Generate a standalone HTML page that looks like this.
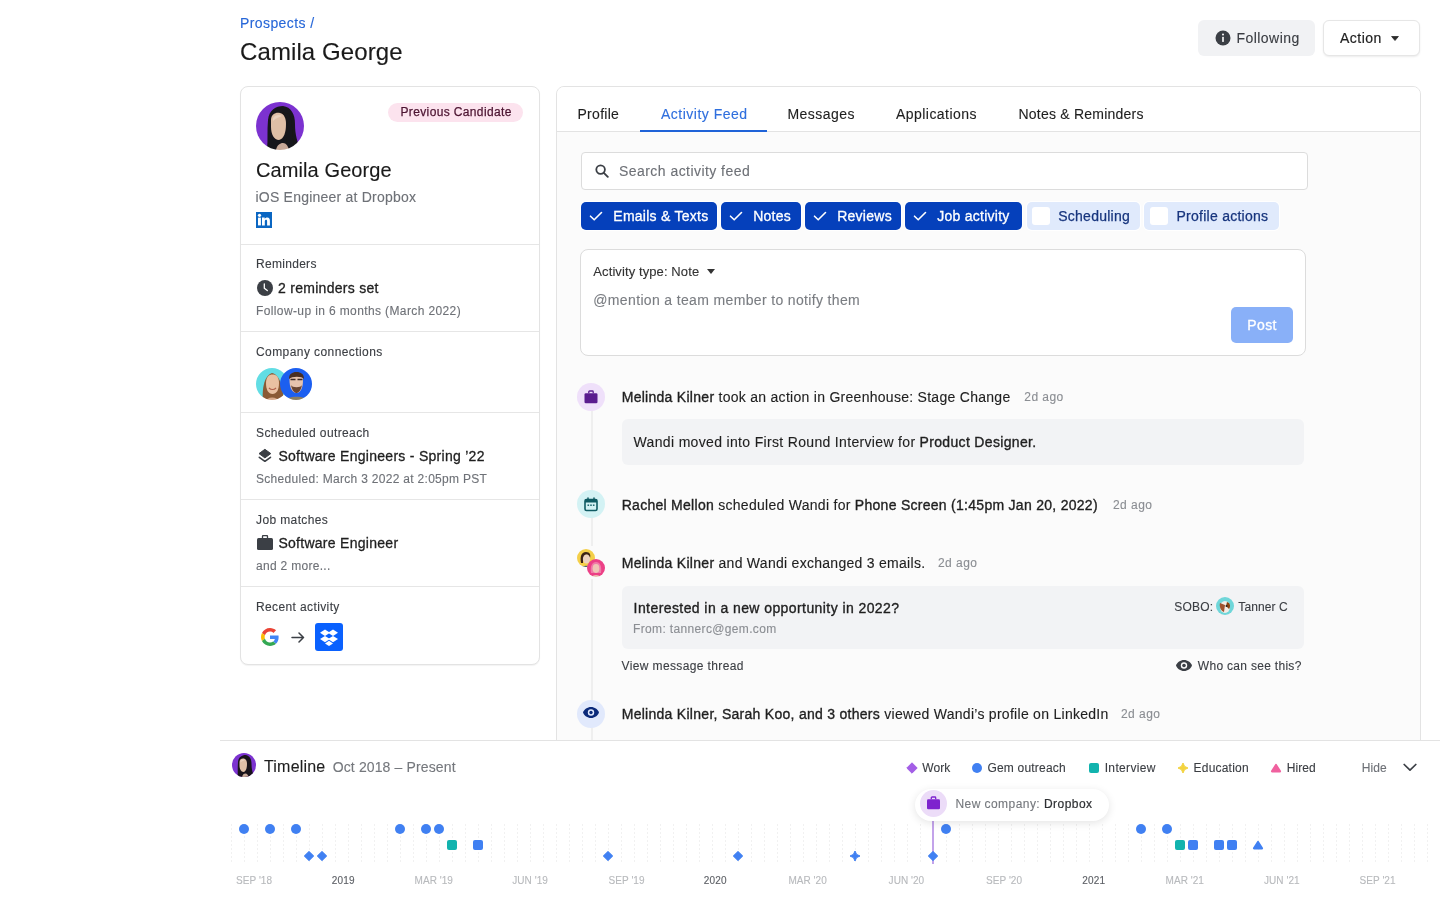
<!DOCTYPE html>
<html><head><meta charset="utf-8">
<style>
*{box-sizing:border-box;margin:0;padding:0}
html,body{width:1440px;height:900px;overflow:hidden;background:#fff}
body{font-family:"Liberation Sans",sans-serif;color:#1f1f1f;position:relative}
.a{position:absolute;white-space:nowrap;line-height:1;-webkit-text-stroke:.12px currentColor}
.t14{font-size:14px;letter-spacing:.28px}
.t12{font-size:12px;letter-spacing:.3px}
.g{color:#6e7177}
.m{-webkit-text-stroke:.35px currentColor}
svg{display:block}
</style></head><body>
<div id="root" style="position:absolute;left:0;top:0;width:1440px;height:900px;will-change:transform;background:#fff">

<!-- header -->
<div class="a t14" style="left:240px;top:16px;color:#2767d8;letter-spacing:.4px">Prospects /</div>
<div class="a" style="left:240px;top:39.5px;font-size:24px;color:#1a1a1a;letter-spacing:.1px">Camila George</div>

<div class="a" style="left:1198px;top:20px;width:117px;height:36px;background:#f1f2f4;border-radius:6px"></div>
<svg class="a" style="left:1215px;top:30px" width="16" height="16" viewBox="0 0 16 16"><circle cx="8" cy="8" r="7.5" fill="#3b3f45"/><rect x="7.2" y="6.8" width="1.6" height="5.2" rx=".4" fill="#fff"/><circle cx="8" cy="4.6" r="1" fill="#fff"/></svg>
<div class="a t14" style="left:1236.5px;top:31px;color:#3a3d42;letter-spacing:.45px">Following</div>

<div class="a" style="left:1323px;top:20px;width:97px;height:36px;background:#fff;border:1px solid #e6e6e6;border-radius:6px;box-shadow:0 1px 2px rgba(0,0,0,.08)"></div>
<div class="a t14" style="left:1340px;top:31px;color:#1f1f1f;letter-spacing:.5px;-webkit-text-stroke:.2px currentColor">Action</div>
<svg class="a" style="left:1390.5px;top:35.5px" width="8" height="5" viewBox="0 0 8 5"><path d="M.6 .5H7.4L4 4.5Z" fill="#2b2b2b" stroke="#2b2b2b" stroke-width=".8" stroke-linejoin="round"/></svg>

<!-- left card -->
<div class="a" style="left:240px;top:86px;width:300px;height:579px;border:1px solid #e3e3e3;border-radius:8px;background:#fff;box-shadow:0 1px 1px rgba(0,0,0,.05)"></div>
<div class="a" style="left:241px;top:244px;width:298px;height:1px;background:#e6e6e6"></div>
<div class="a" style="left:241px;top:331px;width:298px;height:1px;background:#e6e6e6"></div>
<div class="a" style="left:241px;top:412px;width:298px;height:1px;background:#e6e6e6"></div>
<div class="a" style="left:241px;top:499px;width:298px;height:1px;background:#e6e6e6"></div>
<div class="a" style="left:241px;top:586px;width:298px;height:1px;background:#e6e6e6"></div>

<!-- avatar -->
<svg class="a" style="left:256px;top:102px" width="48" height="48" viewBox="0 0 48 48">
<defs><clipPath id="cav"><circle cx="24" cy="24" r="24"/></clipPath></defs>
<filter id="bl0" x="-10%" y="-10%" width="120%" height="120%"><feGaussianBlur stdDeviation="0.6"/></filter><g clip-path="url(#cav)"><g filter="url(#bl0)"><rect x="-4" y="-4" width="56" height="56" fill="#7c33d0"/>
<path d="M11 48C12 38 11 28 12 18C13 8 20 4 27 4C35 5 39 12 39 22C39 32 41 40 45 48Z" fill="#19141a"/>
<path d="M15 18C15 12 20 10 24 11C28 12 30 16 30 22C30 30 28 37 23 38C18 38 15 32 15 25Z" fill="#dfbfa6"/>
<path d="M17 16C19 13 23 12 26 14C24 15 20 16 17 19Z" fill="#ead2bf"/>
<path d="M26 10C31 13 32 20 31 28C30 34 30 39 31 46L38 46C36 34 37 20 33 12Z" fill="#19141a"/>
<path d="M20 48C21 43 24 41 27 41C30 41 32 44 33 48Z" fill="#c7a898"/>
</g></g></svg>

<div class="a" style="left:388px;top:102.5px;width:135px;height:19px;background:#fce3ee;border-radius:10px"></div>
<div class="a t12" style="left:400.5px;top:105.7px;color:#4c1431;letter-spacing:.36px;-webkit-text-stroke:.25px currentColor">Previous Candidate</div>

<div class="a" style="left:256px;top:160px;font-size:20px;color:#1a1a1a;letter-spacing:.1px">Camila George</div>
<div class="a t14" style="left:255.5px;top:190.4px;color:#6e7177;letter-spacing:.22px">iOS Engineer at Dropbox</div>
<svg class="a" style="left:256px;top:212px" width="16" height="16" viewBox="0 0 16 16"><rect width="16" height="16" fill="#0a66c2"/><rect x="2" y="5.6" width="2.9" height="7.8" fill="#fff"/><circle cx="3.5" cy="3.3" r="1.6" fill="#fff"/><path d="M6 5.6H8.7V6.8C9.2 6 10.1 5.4 11.3 5.4C13.2 5.4 13.9 6.7 13.9 8.8V13.4H11.1V9.3C11.1 8.3 10.8 7.8 10.1 7.8C9.3 7.8 8.8 8.4 8.8 9.4V13.4H6Z" fill="#fff"/></svg>

<!-- reminders -->
<div class="a t12" style="left:256px;top:258.4px;color:#3b3e43">Reminders</div>
<svg class="a" style="left:257px;top:280px" width="16" height="16" viewBox="0 0 16 16"><circle cx="8" cy="8" r="8" fill="#3b3f45"/><path d="M7.3 3.8V8.2L10.3 10.6" stroke="#fff" stroke-width="1.3" fill="none" stroke-linecap="round" stroke-linejoin="round"/></svg>
<div class="a t14 m" style="left:278px;top:281px;color:#1f1f1f;-webkit-text-stroke:.3px">2 reminders set</div>
<div class="a t12 g" style="left:256px;top:304.6px;letter-spacing:.38px">Follow-up in 6 months (March 2022)</div>

<!-- company connections -->
<div class="a t12" style="left:256px;top:345.8px;color:#3b3e43;letter-spacing:.42px">Company connections</div>
<svg class="a" style="left:256px;top:368px" width="58" height="32" viewBox="0 0 58 32">
<defs><clipPath id="cc1"><circle cx="16" cy="16" r="16"/></clipPath><clipPath id="cc2"><circle cx="40" cy="16" r="16"/></clipPath><filter id="bl1" x="-10%" y="-10%" width="120%" height="120%"><feGaussianBlur stdDeviation="0.6"/></filter></defs>
<g clip-path="url(#cc1)"><g filter="url(#bl1)"><rect x="-2" y="-2" width="36" height="36" fill="#62dde4"/><path d="M7 34C6 24 7 8 16 5C25 7 27 22 28 34Z" fill="#8a5a34"/><path d="M10 15C10 9 13 6.5 16.5 6.5C20.5 6.5 23 9 23 15C23 22 20.5 26 16.5 26C12.5 26 10 22 10 15Z" fill="#e9c1a2"/><path d="M13 20C15 22 18 22 20 20" stroke="#b0604a" stroke-width="1.2" fill="none"/><path d="M9 34C11 28 21 28 24 34Z" fill="#d7a98a"/></g></g>
<g clip-path="url(#cc2)"><g filter="url(#bl1)"><rect x="22" y="-2" width="36" height="36" fill="#1f5ff0"/><path d="M33.5 12C33.5 6.5 37 5 40.5 5C44.5 5 47 7 47 12C47 20 44.5 25 40.5 25C36.5 25 33.5 20 33.5 12Z" fill="#e6c2ad"/><path d="M33 11C33 6 36 4 40.5 4C45 4 48 6 48 11C46 8 36 8 33 11Z" fill="#4a2e20"/><path d="M34.5 11.5H39.5M41.5 11.5H46.5" stroke="#3a2a25" stroke-width="1.4"/><path d="M35 17C36 23 39 25 40.5 25C42 25 45 23 46 17C45 20 36 20 35 17Z" fill="#6b4533"/><path d="M28 34C30 27 51 27 53 34Z" fill="#8a7f64"/></g></g>
</svg>

<!-- scheduled outreach -->
<div class="a t12" style="left:256px;top:426.8px;color:#3b3e43;letter-spacing:.38px">Scheduled outreach</div>
<svg class="a" style="left:257px;top:448px" width="16" height="16" viewBox="0 0 16 16"><path d="M7.9 1.3L13.8 5.6L7.9 9.9L2 5.6Z" fill="#3b3f45" stroke="#3b3f45" stroke-width="1" stroke-linejoin="round"/><path d="M2.3 9.3L7.9 13.3L13.5 9.3" stroke="#3b3f45" stroke-width="1.6" fill="none" stroke-linecap="round" stroke-linejoin="round"/></svg>
<div class="a t14" style="left:278.4px;top:449.2px;color:#1f1f1f;letter-spacing:.28px;-webkit-text-stroke:.3px">Software Engineers - Spring ’22</div>
<div class="a t12 g" style="left:256px;top:472.8px;letter-spacing:.3px">Scheduled: March 3 2022 at 2:05pm PST</div>

<!-- job matches -->
<div class="a t12" style="left:256px;top:513.8px;color:#3b3e43;letter-spacing:.38px">Job matches</div>
<svg class="a" style="left:257px;top:535px" width="16" height="15" viewBox="0 0 16 15"><path d="M5.5 3V1.5C5.5 .9 6 .5 6.5 .5H9.5C10 .5 10.5 .9 10.5 1.5V3" stroke="#3b3f45" stroke-width="1.3" fill="none"/><rect x="0" y="3" width="16" height="12" rx="1.5" fill="#3b3f45"/></svg>
<div class="a t14" style="left:278.4px;top:536.2px;color:#1f1f1f;letter-spacing:.28px;-webkit-text-stroke:.3px">Software Engineer</div>
<div class="a t12 g" style="left:256px;top:559.8px;letter-spacing:.3px">and 2 more...</div>

<!-- recent activity -->
<div class="a t12" style="left:256px;top:600.8px;color:#3b3e43;letter-spacing:.38px">Recent activity</div>
<svg class="a" style="left:261px;top:628px" width="18" height="18" viewBox="0 0 48 48"><path fill="#EA4335" d="M24 9.5c3.54 0 6.71 1.22 9.21 3.6l6.85-6.85C35.9 2.38 30.47 0 24 0 14.62 0 6.51 5.38 2.56 13.22l7.98 6.19C12.43 13.72 17.74 9.5 24 9.5z"/><path fill="#4285F4" d="M46.98 24.55c0-1.57-.15-3.09-.38-4.55H24v9.02h12.94c-.58 2.96-2.26 5.48-4.78 7.18l7.73 6c4.51-4.18 7.09-10.36 7.09-17.65z"/><path fill="#FBBC05" d="M10.53 28.59c-.48-1.45-.76-2.99-.76-4.59s.27-3.14.76-4.59l-7.98-6.19C.92 16.46 0 20.12 0 24c0 3.88.92 7.54 2.56 10.78l7.97-6.19z"/><path fill="#34A853" d="M24 48c6.48 0 11.93-2.13 15.89-5.81l-7.73-6c-2.15 1.45-4.92 2.3-8.16 2.3-6.26 0-11.57-4.22-13.47-9.91l-7.98 6.19C6.51 42.62 14.62 48 24 48z"/></svg>
<svg class="a" style="left:291px;top:632px" width="14" height="11" viewBox="0 0 14 11"><path d="M1 5.5H12.5M8 1L12.5 5.5L8 10" stroke="#3b3f45" stroke-width="1.5" fill="none" stroke-linecap="round" stroke-linejoin="round"/></svg>
<svg class="a" style="left:315px;top:623px" width="28" height="28" viewBox="0 0 28 28"><rect width="28" height="28" rx="3" fill="#0a61fe"/><g fill="#fff"><path d="M10 6.5L5 9.7L10 12.9L15 9.7Z"/><path d="M18 6.5L13 9.7L18 12.9L23 9.7Z"/><path d="M5 16.1L10 19.3L15 16.1L10 12.9Z"/><path d="M23 16.1L18 19.3L13 16.1L18 12.9Z"/><path d="M10 20.4L14 23L18 20.4L14 17.8Z"/></g></svg>

<!-- right panel -->
<div class="a" style="left:556px;top:86px;width:865px;height:680px;border:1px solid #e3e3e3;border-radius:8px;background:#fbfbfb;overflow:hidden">
  <div style="position:absolute;left:0;top:0;right:0;height:45px;background:#fff;border-bottom:1px solid #e3e3e3"></div>
</div>
<div class="a" style="left:640px;top:130px;width:127px;height:2px;background:#1f63d8"></div>
<div class="a t14" style="left:577.5px;top:106.5px">Profile</div>
<div class="a t14" style="left:661px;top:106.5px;color:#2f6fde;letter-spacing:.5px">Activity Feed</div>
<div class="a t14" style="left:787.5px;top:106.5px;letter-spacing:.45px">Messages</div>
<div class="a t14" style="left:896px;top:106.5px;letter-spacing:.45px">Applications</div>
<div class="a t14" style="left:1018.5px;top:106.5px;letter-spacing:.22px">Notes &amp; Reminders</div>

<!-- search -->
<div class="a" style="left:581px;top:152px;width:727px;height:38px;background:#fff;border:1px solid #dcdcdc;border-radius:4px"></div>
<svg class="a" style="left:594.5px;top:163.5px" width="14" height="14" viewBox="0 0 14 14"><circle cx="5.6" cy="5.6" r="4.3" stroke="#3b3f45" stroke-width="1.8" fill="none"/><path d="M8.8 8.8L12.8 12.8" stroke="#3b3f45" stroke-width="1.9" stroke-linecap="round"/></svg>
<div class="a t14 g" style="left:619px;top:164px;letter-spacing:.45px">Search activity feed</div>

<!-- chips -->
<div class="a" style="left:581px;top:202px;width:136px;height:28px;background:#0540bb;border-radius:5px;box-shadow:0 0 0 1px #fff"></div>
<svg class="a" style="left:588.5px;top:209px" width="14" height="14" viewBox="0 0 14 14"><path d="M1.5 7.2L5.2 10.8L12.5 3.5" stroke="#fff" stroke-width="1.6" fill="none" stroke-linecap="round" stroke-linejoin="round"/></svg>
<div class="a t14" style="left:613.3px;top:208.5px;color:#fff;letter-spacing:.26px;-webkit-text-stroke:.3px currentColor">Emails &amp; Texts</div>
<div class="a" style="left:721px;top:202px;width:80px;height:28px;background:#0540bb;border-radius:5px;box-shadow:0 0 0 1px #fff"></div>
<svg class="a" style="left:728.5px;top:209px" width="14" height="14" viewBox="0 0 14 14"><path d="M1.5 7.2L5.2 10.8L12.5 3.5" stroke="#fff" stroke-width="1.6" fill="none" stroke-linecap="round" stroke-linejoin="round"/></svg>
<div class="a t14" style="left:753.2px;top:208.5px;color:#fff;letter-spacing:.26px;-webkit-text-stroke:.3px currentColor">Notes</div>
<div class="a" style="left:805px;top:202px;width:96px;height:28px;background:#0540bb;border-radius:5px;box-shadow:0 0 0 1px #fff"></div>
<svg class="a" style="left:812.5px;top:209px" width="14" height="14" viewBox="0 0 14 14"><path d="M1.5 7.2L5.2 10.8L12.5 3.5" stroke="#fff" stroke-width="1.6" fill="none" stroke-linecap="round" stroke-linejoin="round"/></svg>
<div class="a t14" style="left:837.2px;top:208.5px;color:#fff;letter-spacing:.26px;-webkit-text-stroke:.3px currentColor">Reviews</div>
<div class="a" style="left:905px;top:202px;width:117px;height:28px;background:#0540bb;border-radius:5px;box-shadow:0 0 0 1px #fff"></div>
<svg class="a" style="left:912.5px;top:209px" width="14" height="14" viewBox="0 0 14 14"><path d="M1.5 7.2L5.2 10.8L12.5 3.5" stroke="#fff" stroke-width="1.6" fill="none" stroke-linecap="round" stroke-linejoin="round"/></svg>
<div class="a t14" style="left:937.2px;top:208.5px;color:#fff;letter-spacing:.26px;-webkit-text-stroke:.3px currentColor">Job activity</div>
<div class="a" style="left:1027px;top:202px;width:113px;height:28px;background:#e0eafc;border-radius:5px;box-shadow:0 0 0 1px #fff"></div>
<div class="a" style="left:1032px;top:207px;width:18px;height:18px;background:#fff;border-radius:3px"></div>
<div class="a t14" style="left:1058.2px;top:208.5px;color:#17357e;letter-spacing:.26px;-webkit-text-stroke:.25px currentColor">Scheduling</div>
<div class="a" style="left:1144px;top:202px;width:135px;height:28px;background:#e0eafc;border-radius:5px;box-shadow:0 0 0 1px #fff"></div>
<div class="a" style="left:1150px;top:207px;width:18px;height:18px;background:#fff;border-radius:3px"></div>
<div class="a t14" style="left:1176.5px;top:208.5px;color:#17357e;letter-spacing:.26px;-webkit-text-stroke:.25px currentColor">Profile actions</div>

<!-- composer -->
<div class="a" style="left:580px;top:249px;width:726px;height:107px;background:#fff;border:1px solid #dcdcdc;border-radius:8px"></div>
<div class="a" style="left:593.3px;top:264.6px;font-size:13px;color:#333;letter-spacing:.1px">Activity type: Note</div>
<svg class="a" style="left:707px;top:269px" width="8" height="5" viewBox="0 0 8 5"><path d="M0 0H8L4 5Z" fill="#333"/></svg>
<div class="a t14" style="left:593.3px;top:292.5px;color:#7a7d82;letter-spacing:.35px">@mention a team member to notify them</div>
<div class="a" style="left:1231px;top:307px;width:62px;height:36px;background:#89b0f8;border-radius:5px"></div>
<div class="a t14" style="left:1247.3px;top:318px;color:#fff;letter-spacing:.4px;-webkit-text-stroke:.3px currentColor">Post</div>

<!-- feed line -->
<div class="a" style="left:591px;top:405px;width:2px;height:335px;background:#efefef"></div>

<!-- item 1 -->
<div class="a" style="left:577px;top:383px;width:28px;height:28px;border-radius:50%;background:#efe0fa"></div>
<svg class="a" style="left:584px;top:390px" width="14" height="14" viewBox="0 0 14 14"><path d="M4.8 3.2V1.8C4.8 1.3 5.2 1 5.6 1H8.4C8.8 1 9.2 1.3 9.2 1.8V3.2" stroke="#5b1c8f" stroke-width="1.3" fill="none"/><rect x="0.5" y="3.2" width="13" height="10" rx="1.3" fill="#5b1c8f"/></svg>
<div class="a t14" style="left:621.7px;top:389.9px;color:#1f1f1f"><span class="m">Melinda Kilner</span> took an action in Greenhouse: Stage Change</div>
<div class="a t12" style="left:1024.3px;top:390.8px;color:#8b8e93;letter-spacing:.45px">2d ago</div>
<div class="a" style="left:622px;top:419px;width:682px;height:46px;background:#f2f3f5;border-radius:6px"></div>
<div class="a t14" style="left:633.6px;top:435.2px;color:#1f1f1f;letter-spacing:.33px">Wandi moved into First Round Interview for <span class="m">Product Designer.</span></div>

<!-- item 2 -->
<div class="a" style="left:577px;top:490px;width:28px;height:28px;border-radius:50%;background:#d3f2f4"></div>
<svg class="a" style="left:584px;top:496.5px" width="14" height="15" viewBox="0 0 14 15"><rect x="1" y="2.5" width="12" height="11" rx="1.5" stroke="#0f5b63" stroke-width="1.6" fill="none"/><rect x="1" y="2.5" width="12" height="3" fill="#0f5b63"/><path d="M4 1V3.5M10 1V3.5" stroke="#0f5b63" stroke-width="1.5" stroke-linecap="round"/><rect x="3.5" y="7.5" width="1.6" height="1.4" fill="#0f5b63"/><rect x="6.2" y="7.5" width="1.6" height="1.4" fill="#0f5b63"/><rect x="8.9" y="7.5" width="1.6" height="1.4" fill="#0f5b63"/></svg>
<div class="a t14" style="left:621.7px;top:498px;color:#1f1f1f"><span class="m">Rachel Mellon</span> scheduled Wandi for <span class="m">Phone Screen (1:45pm Jan 20, 2022)</span></div>
<div class="a t12" style="left:1113px;top:498.8px;color:#8b8e93;letter-spacing:.45px">2d ago</div>

<!-- item 3 -->
<div class="a" style="left:578px;top:546px;width:28px;height:33px;background:#fbfbfb"></div>
<svg class="a" style="left:577px;top:549px" width="29" height="28" viewBox="0 0 29 28">
<defs><clipPath id="fa1"><circle cx="9" cy="9" r="9"/></clipPath><clipPath id="fa2"><circle cx="19" cy="19" r="9"/></clipPath></defs>
<filter id="bl3" x="-10%" y="-10%" width="120%" height="120%"><feGaussianBlur stdDeviation="0.5"/></filter><g clip-path="url(#fa1)"><g filter="url(#bl3)"><rect x="-1" y="-1" width="20" height="20" fill="#f4cf4a"/><path d="M4 14C3 8 4 3 9 3C13 3 14 6 13 9L11 6C8 5 6 7 6 14Z" fill="#3a2418"/><ellipse cx="9.5" cy="10" rx="3.6" ry="4.6" fill="#ecd2bf"/><path d="M4 19C5 16 13 16 14 19Z" fill="#3d5a58"/></g></g>

<g clip-path="url(#fa2)"><g filter="url(#bl3)"><rect x="9" y="9" width="20" height="20" fill="#ec3f86"/><path d="M14 24C13 17 15 13 19 13C23 13 25 17 24 24Z" fill="#f07aa8"/><ellipse cx="19" cy="19.5" rx="3.4" ry="4.4" fill="#efc6b6"/><path d="M14 29C15 25 23 25 24 29Z" fill="#eabcae"/></g></g>
</svg>
<div class="a t14" style="left:621.7px;top:556.2px;color:#1f1f1f"><span class="m">Melinda Kilner</span> and Wandi exchanged 3 emails.</div>
<div class="a t12" style="left:938px;top:557px;color:#8b8e93;letter-spacing:.45px">2d ago</div>
<div class="a" style="left:622px;top:586px;width:682px;height:63px;background:#f2f3f5;border-radius:6px"></div>
<div class="a t14" style="left:633.6px;top:601px;color:#1f1f1f;-webkit-text-stroke:.35px;letter-spacing:.42px">Interested in a new opportunity in 2022?</div>
<div class="a t12" style="left:633px;top:622.8px;color:#8b8e93;letter-spacing:.35px">From: tannerc@gem.com</div>
<div class="a t12" style="left:1174.2px;top:600.5px;color:#3b3e43;letter-spacing:.2px">SOBO:</div>
<svg class="a" style="left:1216px;top:596.5px" width="18" height="18" viewBox="0 0 18 18"><defs><clipPath id="tc"><circle cx="9" cy="9" r="9"/></clipPath></defs><g clip-path="url(#tc)"><rect width="18" height="18" fill="#6fd6d9"/><ellipse cx="9" cy="10" rx="5" ry="6" fill="#f3ece6"/><path d="M4 6C3 10 5 14 8 15L9 8Z" fill="#a0522d"/><path d="M11 5C14 6 15 9 13 12L10 9Z" fill="#8b4513"/><circle cx="10.5" cy="9" r="1" fill="#222"/></g></svg>
<div class="a t12" style="left:1238.3px;top:600.5px;color:#3b3e43;letter-spacing:.1px">Tanner C</div>
<div class="a t12" style="left:621.5px;top:659.6px;color:#3b3e43;letter-spacing:.38px">View message thread</div>
<svg class="a" style="left:1176px;top:660px" width="16" height="11" viewBox="0 0 16 11"><path d="M8 0C4.3 0 1.3 2.3 0 5.5C1.3 8.7 4.3 11 8 11C11.7 11 14.7 8.7 16 5.5C14.7 2.3 11.7 0 8 0Z" fill="#3b3f45"/><circle cx="8" cy="5.5" r="3.2" fill="#fafafa"/><circle cx="8" cy="5.5" r="1.8" fill="#3b3f45"/></svg>
<div class="a t12" style="left:1197.8px;top:659.6px;color:#3b3e43;letter-spacing:.3px">Who can see this?</div>

<!-- item 4 -->
<div class="a" style="left:577px;top:699.5px;width:28px;height:28px;border-radius:50%;background:#e1e9fc"></div>
<svg class="a" style="left:583px;top:707px" width="16" height="11" viewBox="0 0 16 11"><path d="M8 0C4.3 0 1.3 2.3 0 5.5C1.3 8.7 4.3 11 8 11C11.7 11 14.7 8.7 16 5.5C14.7 2.3 11.7 0 8 0Z" fill="#0b2a7a"/><circle cx="8" cy="5.5" r="3.2" fill="#e1e9fc"/><circle cx="8" cy="5.5" r="1.7" fill="#0b2a7a"/></svg>
<div class="a t14" style="left:621.7px;top:707.2px;color:#1f1f1f"><span class="m">Melinda Kilner, Sarah Koo, and 3 others</span> viewed Wandi’s profile on LinkedIn</div>
<div class="a t12" style="left:1121px;top:708px;color:#8b8e93;letter-spacing:.45px">2d ago</div>

<div class="a" style="left:220px;top:740px;width:1220px;height:160px;background:#fff;border-top:1px solid #e3e3e3"></div>
<svg class="a" style="left:232px;top:753px" width="24" height="24" viewBox="0 0 48 48">
<defs><clipPath id="cav2"><circle cx="24" cy="24" r="24"/></clipPath></defs>
<g clip-path="url(#cav2)"><rect width="48" height="48" fill="#7c33d0"/>
<path d="M11 48C12 38 11 28 12 18C13 8 20 4 27 4C35 5 39 12 39 22C39 32 41 40 45 48Z" fill="#19141a"/>
<path d="M15 18C15 12 20 10 24 11C28 12 30 16 30 22C30 30 28 37 23 38C18 38 15 32 15 25Z" fill="#dfbfa6"/>
<path d="M17 16C19 13 23 12 26 14C24 15 20 16 17 19Z" fill="#ead2bf"/>
<path d="M26 10C31 13 32 20 31 28C30 34 30 39 31 46L38 46C36 34 37 20 33 12Z" fill="#19141a"/>
<path d="M20 48C21 43 24 41 27 41C30 41 32 44 33 48Z" fill="#c7a898"/>
</g></svg>
<div class="a" style="left:264px;top:759px;font-size:16px;color:#1f1f1f;letter-spacing:.19px">Timeline</div>
<div class="a t14" style="left:332.7px;top:759.6px;color:#75787d;letter-spacing:.13px">Oct 2018 – Present</div>
<svg class="a" style="left:906px;top:762px" width="12" height="12" viewBox="0 0 12 12"><path d="M6 .8L11.2 6L6 11.2L.8 6Z" fill="#a35ee6" stroke="#a35ee6" stroke-width="1" stroke-linejoin="round"/></svg>
<div class="a t12" style="left:922.2px;top:761.6px;color:#3b3e43;letter-spacing:.1px">Work</div>
<div class="a" style="left:972px;top:763px;width:10px;height:10px;border-radius:50%;background:#4080f2"></div>
<div class="a t12" style="left:987.4px;top:761.6px;color:#3b3e43;letter-spacing:.2px">Gem outreach</div>
<div class="a" style="left:1089px;top:763px;width:10px;height:10px;border-radius:2px;background:#12b3ae"></div>
<div class="a t12" style="left:1104.7px;top:761.6px;color:#3b3e43;letter-spacing:.35px">Interview</div>
<svg class="a" style="left:1177px;top:762px" width="12" height="12" viewBox="0 0 12 12"><path d="M6 1L7.6 4.4L11 6L7.6 7.6L6 11L4.4 7.6L1 6L4.4 4.4Z" fill="#f3d33f" stroke="#f3d33f" stroke-width="1" stroke-linejoin="round"/></svg>
<div class="a t12" style="left:1193.6px;top:761.6px;color:#3b3e43;letter-spacing:.2px">Education</div>
<svg class="a" style="left:1270px;top:762px" width="12" height="11" viewBox="0 0 12 11"><path d="M6 3L10 9.3H2Z" fill="#f0619f" stroke="#f0619f" stroke-width="2.2" stroke-linejoin="round"/></svg>
<div class="a t12" style="left:1286.7px;top:761.6px;color:#3b3e43;letter-spacing:.1px">Hired</div>
<div class="a t12" style="left:1361.7px;top:761.6px;color:#6e7177;letter-spacing:.1px">Hide</div>
<svg class="a" style="left:1403px;top:763px" width="14" height="9" viewBox="0 0 14 9"><path d="M1.2 1.5L7 7.2L12.8 1.5" stroke="#3b3f45" stroke-width="1.7" fill="none" stroke-linecap="round" stroke-linejoin="round"/></svg>
<svg class="a" style="left:0;top:0" width="1440" height="900"><g stroke="#f1f1f1" stroke-width="1" stroke-dasharray="2 2"><line x1="231.5" y1="824" x2="231.5" y2="864"/><line x1="244.5" y1="824" x2="244.5" y2="864"/><line x1="257.5" y1="824" x2="257.5" y2="864"/><line x1="270.5" y1="824" x2="270.5" y2="864"/><line x1="283.5" y1="824" x2="283.5" y2="864"/><line x1="296.5" y1="824" x2="296.5" y2="864"/><line x1="309.5" y1="824" x2="309.5" y2="864"/><line x1="322.5" y1="824" x2="322.5" y2="864"/><line x1="335.5" y1="824" x2="335.5" y2="864"/><line x1="348.5" y1="824" x2="348.5" y2="864"/><line x1="361.5" y1="824" x2="361.5" y2="864"/><line x1="374.5" y1="824" x2="374.5" y2="864"/><line x1="387.5" y1="824" x2="387.5" y2="864"/><line x1="400.5" y1="824" x2="400.5" y2="864"/><line x1="413.5" y1="824" x2="413.5" y2="864"/><line x1="426.5" y1="824" x2="426.5" y2="864"/><line x1="439.5" y1="824" x2="439.5" y2="864"/><line x1="452.5" y1="824" x2="452.5" y2="864"/><line x1="465.5" y1="824" x2="465.5" y2="864"/><line x1="478.5" y1="824" x2="478.5" y2="864"/><line x1="491.5" y1="824" x2="491.5" y2="864"/><line x1="504.5" y1="824" x2="504.5" y2="864"/><line x1="517.5" y1="824" x2="517.5" y2="864"/><line x1="530.5" y1="824" x2="530.5" y2="864"/><line x1="543.5" y1="824" x2="543.5" y2="864"/><line x1="556.5" y1="824" x2="556.5" y2="864"/><line x1="569.5" y1="824" x2="569.5" y2="864"/><line x1="582.5" y1="824" x2="582.5" y2="864"/><line x1="595.5" y1="824" x2="595.5" y2="864"/><line x1="608.5" y1="824" x2="608.5" y2="864"/><line x1="621.5" y1="824" x2="621.5" y2="864"/><line x1="634.5" y1="824" x2="634.5" y2="864"/><line x1="647.5" y1="824" x2="647.5" y2="864"/><line x1="660.5" y1="824" x2="660.5" y2="864"/><line x1="673.5" y1="824" x2="673.5" y2="864"/><line x1="686.5" y1="824" x2="686.5" y2="864"/><line x1="699.5" y1="824" x2="699.5" y2="864"/><line x1="712.5" y1="824" x2="712.5" y2="864"/><line x1="725.5" y1="824" x2="725.5" y2="864"/><line x1="738.5" y1="824" x2="738.5" y2="864"/><line x1="751.5" y1="824" x2="751.5" y2="864"/><line x1="764.5" y1="824" x2="764.5" y2="864"/><line x1="777.5" y1="824" x2="777.5" y2="864"/><line x1="790.5" y1="824" x2="790.5" y2="864"/><line x1="803.5" y1="824" x2="803.5" y2="864"/><line x1="816.5" y1="824" x2="816.5" y2="864"/><line x1="829.5" y1="824" x2="829.5" y2="864"/><line x1="842.5" y1="824" x2="842.5" y2="864"/><line x1="855.5" y1="824" x2="855.5" y2="864"/><line x1="868.5" y1="824" x2="868.5" y2="864"/><line x1="881.5" y1="824" x2="881.5" y2="864"/><line x1="894.5" y1="824" x2="894.5" y2="864"/><line x1="907.5" y1="824" x2="907.5" y2="864"/><line x1="920.5" y1="824" x2="920.5" y2="864"/><line x1="933.5" y1="824" x2="933.5" y2="864"/><line x1="946.5" y1="824" x2="946.5" y2="864"/><line x1="959.5" y1="824" x2="959.5" y2="864"/><line x1="972.5" y1="824" x2="972.5" y2="864"/><line x1="985.5" y1="824" x2="985.5" y2="864"/><line x1="998.5" y1="824" x2="998.5" y2="864"/><line x1="1011.5" y1="824" x2="1011.5" y2="864"/><line x1="1024.5" y1="824" x2="1024.5" y2="864"/><line x1="1037.5" y1="824" x2="1037.5" y2="864"/><line x1="1050.5" y1="824" x2="1050.5" y2="864"/><line x1="1063.5" y1="824" x2="1063.5" y2="864"/><line x1="1076.5" y1="824" x2="1076.5" y2="864"/><line x1="1089.5" y1="824" x2="1089.5" y2="864"/><line x1="1102.5" y1="824" x2="1102.5" y2="864"/><line x1="1115.5" y1="824" x2="1115.5" y2="864"/><line x1="1128.5" y1="824" x2="1128.5" y2="864"/><line x1="1141.5" y1="824" x2="1141.5" y2="864"/><line x1="1154.5" y1="824" x2="1154.5" y2="864"/><line x1="1167.5" y1="824" x2="1167.5" y2="864"/><line x1="1180.5" y1="824" x2="1180.5" y2="864"/><line x1="1193.5" y1="824" x2="1193.5" y2="864"/><line x1="1206.5" y1="824" x2="1206.5" y2="864"/><line x1="1219.5" y1="824" x2="1219.5" y2="864"/><line x1="1232.5" y1="824" x2="1232.5" y2="864"/><line x1="1245.5" y1="824" x2="1245.5" y2="864"/><line x1="1258.5" y1="824" x2="1258.5" y2="864"/><line x1="1271.5" y1="824" x2="1271.5" y2="864"/><line x1="1284.5" y1="824" x2="1284.5" y2="864"/><line x1="1297.5" y1="824" x2="1297.5" y2="864"/><line x1="1310.5" y1="824" x2="1310.5" y2="864"/><line x1="1323.5" y1="824" x2="1323.5" y2="864"/><line x1="1336.5" y1="824" x2="1336.5" y2="864"/><line x1="1349.5" y1="824" x2="1349.5" y2="864"/><line x1="1362.5" y1="824" x2="1362.5" y2="864"/><line x1="1375.5" y1="824" x2="1375.5" y2="864"/><line x1="1388.5" y1="824" x2="1388.5" y2="864"/><line x1="1401.5" y1="824" x2="1401.5" y2="864"/><line x1="1414.5" y1="824" x2="1414.5" y2="864"/><line x1="1427.5" y1="824" x2="1427.5" y2="864"/><line x1="1440.5" y1="824" x2="1440.5" y2="864"/></g></svg>
<div class="a" style="left:932px;top:818px;width:2px;height:46px;background:#c3a3ea"></div>
<div class="a" style="left:239px;top:824px;width:10px;height:10px;border-radius:50%;background:#4080f2"></div>
<div class="a" style="left:265px;top:824px;width:10px;height:10px;border-radius:50%;background:#4080f2"></div>
<div class="a" style="left:291px;top:824px;width:10px;height:10px;border-radius:50%;background:#4080f2"></div>
<div class="a" style="left:395px;top:824px;width:10px;height:10px;border-radius:50%;background:#4080f2"></div>
<div class="a" style="left:421px;top:824px;width:10px;height:10px;border-radius:50%;background:#4080f2"></div>
<div class="a" style="left:434px;top:824px;width:10px;height:10px;border-radius:50%;background:#4080f2"></div>
<div class="a" style="left:941px;top:824px;width:10px;height:10px;border-radius:50%;background:#4080f2"></div>
<div class="a" style="left:1136px;top:824px;width:10px;height:10px;border-radius:50%;background:#4080f2"></div>
<div class="a" style="left:1162px;top:824px;width:10px;height:10px;border-radius:50%;background:#4080f2"></div>
<svg class="a" style="left:303px;top:850px" width="12" height="12" viewBox="0 0 12 12"><path d="M6 1.6L10.4 6L6 10.4L1.6 6Z" fill="#4080f2" stroke="#4080f2" stroke-width="1.1" stroke-linejoin="round"/></svg>
<svg class="a" style="left:316px;top:850px" width="12" height="12" viewBox="0 0 12 12"><path d="M6 1.6L10.4 6L6 10.4L1.6 6Z" fill="#4080f2" stroke="#4080f2" stroke-width="1.1" stroke-linejoin="round"/></svg>
<svg class="a" style="left:602px;top:850px" width="12" height="12" viewBox="0 0 12 12"><path d="M6 1.6L10.4 6L6 10.4L1.6 6Z" fill="#4080f2" stroke="#4080f2" stroke-width="1.1" stroke-linejoin="round"/></svg>
<svg class="a" style="left:732px;top:850px" width="12" height="12" viewBox="0 0 12 12"><path d="M6 1.6L10.4 6L6 10.4L1.6 6Z" fill="#4080f2" stroke="#4080f2" stroke-width="1.1" stroke-linejoin="round"/></svg>
<svg class="a" style="left:927px;top:850px" width="12" height="12" viewBox="0 0 12 12"><path d="M6 1.6L10.4 6L6 10.4L1.6 6Z" fill="#4080f2" stroke="#4080f2" stroke-width="1.1" stroke-linejoin="round"/></svg>
<div class="a" style="left:473px;top:840px;width:10px;height:10px;border-radius:2px;background:#4080f2"></div>
<div class="a" style="left:1188px;top:840px;width:10px;height:10px;border-radius:2px;background:#4080f2"></div>
<div class="a" style="left:1214px;top:840px;width:10px;height:10px;border-radius:2px;background:#4080f2"></div>
<div class="a" style="left:1227px;top:840px;width:10px;height:10px;border-radius:2px;background:#4080f2"></div>
<div class="a" style="left:447px;top:840px;width:10px;height:10px;border-radius:2px;background:#12b3ae"></div>
<div class="a" style="left:1175px;top:840px;width:10px;height:10px;border-radius:2px;background:#12b3ae"></div>
<svg class="a" style="left:849px;top:850px" width="12" height="12" viewBox="0 0 12 12"><path d="M6 1L7.6 4.4L11 6L7.6 7.6L6 11L4.4 7.6L1 6L4.4 4.4Z" fill="#4080f2" stroke="#4080f2" stroke-width="1" stroke-linejoin="round"/></svg>
<svg class="a" style="left:1252px;top:839px" width="12" height="11" viewBox="0 0 12 11"><path d="M6 3L10 9.3H2Z" fill="#4080f2" stroke="#4080f2" stroke-width="2.2" stroke-linejoin="round"/></svg>
<div class="a" style="left:915px;top:789px;width:194px;height:32px;border-radius:16px;background:#fff;box-shadow:0 2px 8px rgba(0,0,0,.11)"></div>
<div class="a" style="left:919.5px;top:789.5px;width:27px;height:27px;border-radius:50%;background:#ecdcf8"></div>
<svg class="a" style="left:925.5px;top:796px" width="15" height="14" viewBox="0 0 14 14"><path d="M4.8 3.2V1.8C4.8 1.3 5.2 1 5.6 1H8.4C8.8 1 9.2 1.3 9.2 1.8V3.2" stroke="#7e22ce" stroke-width="1.3" fill="none"/><rect x="0.5" y="3.2" width="13" height="10" rx="1.3" fill="#7e22ce"/></svg>
<div class="a t12" style="left:955.4px;top:797.8px;color:#75787d;letter-spacing:.45px">New company: <span style="color:#2f3134;-webkit-text-stroke:.2px">Dropbox</span></div>
<div class="a" style="left:236.1px;top:876.4px;font-size:10px;color:#b8babd;letter-spacing:.05px">SEP &#39;18</div>
<div class="a" style="left:331.7px;top:876.4px;font-size:10px;color:#5d6066;letter-spacing:.2px;">2019</div>
<div class="a" style="left:414.6px;top:876.4px;font-size:10px;color:#b8babd;letter-spacing:.05px">MAR &#39;19</div>
<div class="a" style="left:512.3px;top:876.4px;font-size:10px;color:#b8babd;letter-spacing:.05px">JUN &#39;19</div>
<div class="a" style="left:608.6px;top:876.4px;font-size:10px;color:#b8babd;letter-spacing:.05px">SEP &#39;19</div>
<div class="a" style="left:703.8px;top:876.4px;font-size:10px;color:#5d6066;letter-spacing:.2px;">2020</div>
<div class="a" style="left:788.4px;top:876.4px;font-size:10px;color:#b8babd;letter-spacing:.05px">MAR &#39;20</div>
<div class="a" style="left:888.6px;top:876.4px;font-size:10px;color:#b8babd;letter-spacing:.05px">JUN &#39;20</div>
<div class="a" style="left:986.1px;top:876.4px;font-size:10px;color:#b8babd;letter-spacing:.05px">SEP &#39;20</div>
<div class="a" style="left:1082.2px;top:876.4px;font-size:10px;color:#5d6066;letter-spacing:.2px;">2021</div>
<div class="a" style="left:1165.6px;top:876.4px;font-size:10px;color:#b8babd;letter-spacing:.05px">MAR &#39;21</div>
<div class="a" style="left:1264px;top:876.4px;font-size:10px;color:#b8babd;letter-spacing:.05px">JUN &#39;21</div>
<div class="a" style="left:1359.6px;top:876.4px;font-size:10px;color:#b8babd;letter-spacing:.05px">SEP &#39;21</div>

</div>
</body></html>
